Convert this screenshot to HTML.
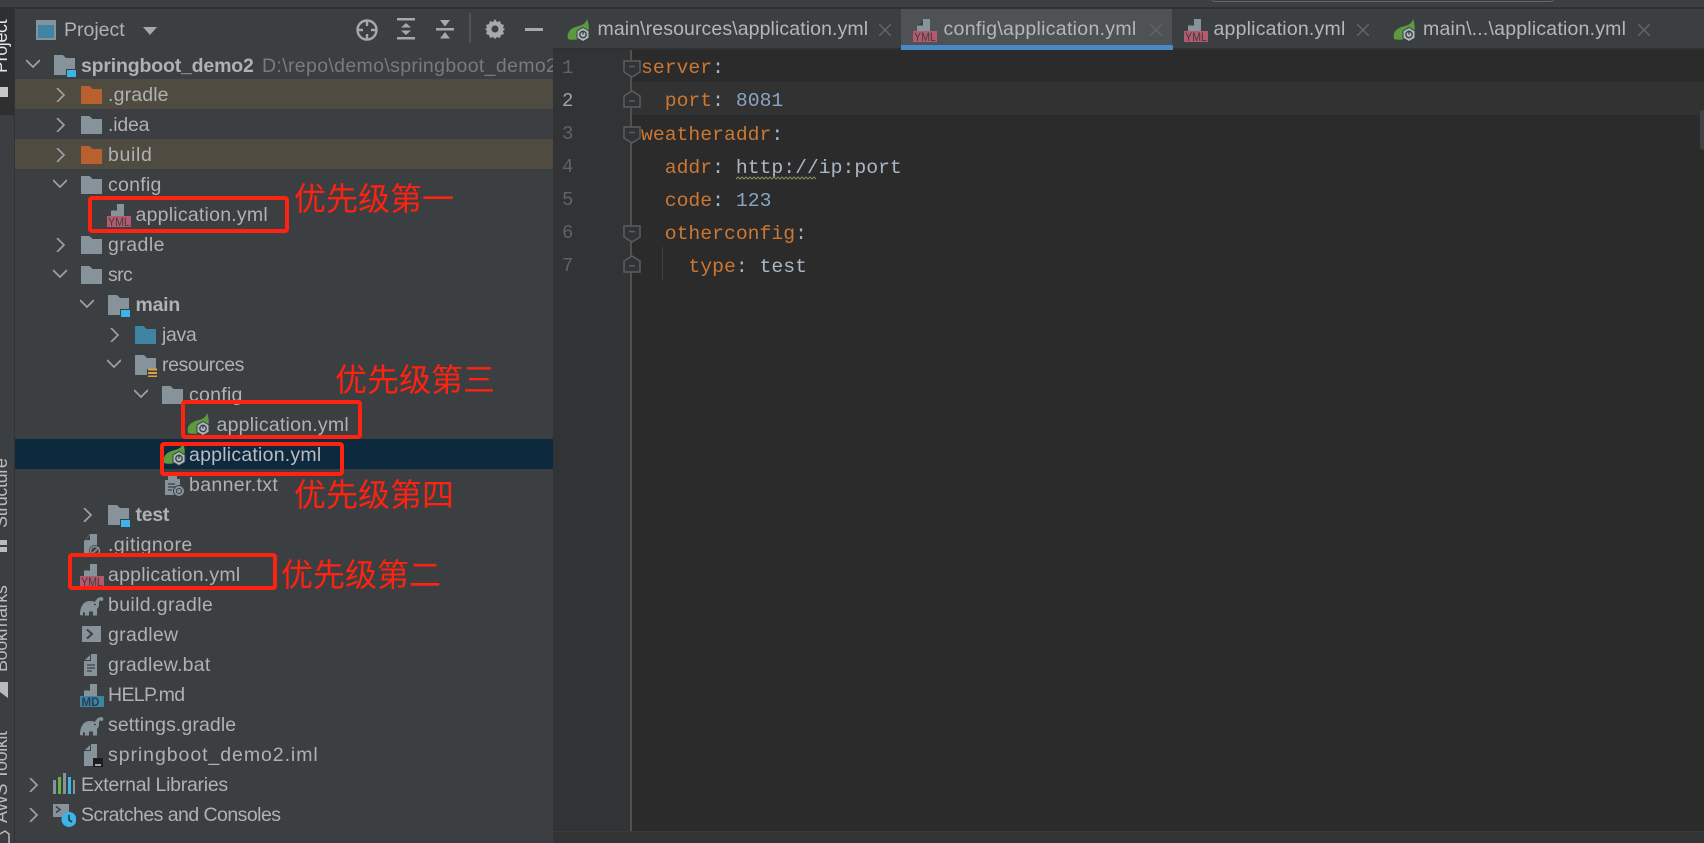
<!DOCTYPE html>
<html><head><meta charset="utf-8"><style>
html,body{margin:0;padding:0;background:#3c3f41;width:1704px;height:843px;overflow:hidden}
#p{position:relative;width:1704px;height:843px;overflow:hidden;font-family:"Liberation Sans","Noto Sans CJK SC",sans-serif}
.a{position:absolute}
.r{position:absolute;white-space:pre;height:30px;line-height:30px;margin-top:1px;font-size:19.5px;letter-spacing:.45px;color:#afb1b3}
.band{position:absolute;left:15px;width:538px;height:30px}
.i{position:absolute;width:24px;height:24px;overflow:visible}
.c{position:absolute;width:14px;height:14px;fill:none;stroke:#9da0a2;stroke-width:1.7}
.box{position:absolute;box-sizing:border-box;border:4px solid #fe2310;border-radius:4px}
.red{position:absolute;color:#fe2310;font-size:32px;line-height:32px;white-space:pre;font-family:"Noto Sans CJK SC",sans-serif;font-weight:400}
.tab{position:absolute;top:10px;line-height:39px;height:39px;font-size:19.5px;letter-spacing:.2px;color:#b4b7b9;white-space:pre}
.x{position:absolute;top:24px;width:12px;height:12px;stroke:#5f6365;stroke-width:1.6;fill:none}
.l{position:absolute;left:641px;white-space:pre;font-family:"Liberation Mono",monospace;font-size:19.75px;line-height:33px;height:33px;color:#a9b7c6}
.k{color:#cc7832}.n{color:#8aa5c0}
.ln{position:absolute;left:562px;font-family:"Liberation Mono",monospace;font-size:19px;line-height:33px;color:#606366}
.f{position:absolute;left:623px;width:18px;height:18px;fill:#313335;stroke:#5a5c5e;stroke-width:1.5}
.v{position:absolute;left:0;transform-origin:0 0;transform:rotate(-90deg);white-space:pre;font-size:18px;color:#bbbbbb;letter-spacing:-.4px;line-height:20px}
</style></head><body><div id="p">
<svg width="0" height="0" style="position:absolute"><defs>
<symbol id="folder" viewBox="0 0 24 24"><path d="M2 4h8.500l3 3H23v15H2z" fill="#87939a"/></symbol>
<symbol id="ofolder" viewBox="0 0 24 24"><path d="M2 4h8.500l3 3H23v15H2z" fill="#b8602e"/></symbol>
<symbol id="bfolder" viewBox="0 0 24 24"><path d="M2 4h8.500l3 3H23v15H2z" fill="#3f85a3"/></symbol>
<symbol id="mod" viewBox="0 0 24 24"><path d="M2 2h9l3 3h9v11h-9v6H2z" fill="#87939a"/><rect x="15" y="17" width="9" height="9" fill="#3cb4e7"/></symbol>
<symbol id="res" viewBox="0 0 24 24"><path d="M2 2h9l3 3h9v11h-9v6H2z" fill="#87939a"/><path d="M15 15.500h9v2h-9zM15 19h9v2h-9zM15 22.500h9v2h-9z" fill="#d9a343"/></symbol>
<symbol id="yml" viewBox="0 0 24 24"><path d="M10 1h7v12h-7zM4 13V8l7-7v12z" fill="#87939a"/><path d="M4.500 7.500l5.500-5.500v5.500z" fill="#3c3f41"/><rect x="0" y="13" width="24" height="11" fill="#b5596f"/><text x="1" y="23" textLength="22" lengthAdjust="spacingAndGlyphs" font-family="Liberation Sans" font-size="12" fill="#3c3f41">YML</text></symbol>
<symbol id="md" viewBox="0 0 24 24"><path d="M10 1h7v12h-7zM4 13V8l7-7v12z" fill="#87939a"/><path d="M4.500 7.500l5.500-5.500v5.500z" fill="#3c3f41"/><rect x="0" y="13" width="24" height="11" fill="#3a85a8"/><text x="1.500" y="23" font-family="Liberation Sans" font-weight="bold" font-size="11.500" fill="#2b3f4a">MD</text></symbol>
<symbol id="spring" viewBox="0 0 24 24"><path d="M1 20C-1 11 7 8 12 7c4-1 7-3 8-7 3 8 2 14-2 17-5 3-11 5-17 3z" fill="#5b9a3e"/><path d="M16 8.500l6 3.500v7l-6 3.500-6-3.500v-7z" fill="#aeb9c0" stroke="#3c3f41" stroke-width="1"/><circle cx="16" cy="15.500" r="3.200" fill="none" stroke="#3c3f41" stroke-width="1.400"/><path d="M16 11.500v4" stroke="#3c3f41" stroke-width="1.400"/></symbol>
<symbol id="txt" viewBox="0 0 24 24"><path d="M6 1h9v5h3v8H6z" fill="#87939a"/><path d="M3 7h13v15H3z" fill="#87939a"/><path d="M6 11h7M6 14h7M6 17h4" stroke="#3c3f41" stroke-width="1.300"/><circle cx="17" cy="18" r="5.500" fill="#87939a" stroke="#3c3f41"/><circle cx="17" cy="18" r="2.500" fill="none" stroke="#3c3f41"/></symbol>
<symbol id="git" viewBox="0 0 24 24"><path d="M10 1h7v13h-1v8H4V8z" fill="#87939a"/><path d="M5 7l5-5v5z" fill="#3c3f41"/><circle cx="15" cy="18" r="6" fill="#3c3f41"/><circle cx="15" cy="18" r="4.500" fill="none" stroke="#87939a" stroke-width="1.500"/><path d="M12 21l6-6" stroke="#87939a" stroke-width="1.500"/></symbol>
<symbol id="doc" viewBox="0 0 24 24"><path d="M11 1h6v22H4V8h7z" fill="#87939a"/><path d="M5 7l5-5v5z" fill="#87939a"/><path d="M7 12h8M7 15h8M7 18h5" stroke="#3c3f41" stroke-width="1.300"/></symbol>
<symbol id="iml" viewBox="0 0 24 24"><path d="M11 1h6v22H4V8h7z" fill="#87939a"/><path d="M5 7l5-5v5z" fill="#87939a"/><rect x="13" y="15" width="10" height="9" fill="#1b1c1d"/><path d="M15 22h6" stroke="#ddd" stroke-width="1.400"/></symbol>
<symbol id="term" viewBox="0 0 24 24"><rect x="2" y="3" width="19" height="16" fill="#87939a"/><path d="M7 6.500l5 4.500-5 4.500" fill="none" stroke="#3c3f41" stroke-width="2"/></symbol>
<symbol id="gradle" viewBox="0 0 24 24"><path d="M0 22C0 13 4 8 10 8c2 0 4 .5 5 1 1-3 4-5 6-5 2 0 3 2 2 3.500-1 1-2 0-3 0-1 .5-1 2-1 4 0 2-1 4-2 4v7h-4v-4H9v4H5v-3H3v3z" fill="#87939a"/><path d="M14 11.500l2 0" stroke="#3c3f41" stroke-width="1.200"/></symbol>
<symbol id="lib" viewBox="0 0 24 24"><path d="M1 8h3v14H1z" fill="#87939a"/><path d="M6 5h3v17H6z" fill="#62b543"/><path d="M11 1h3v21h-3z" fill="#87939a"/><path d="M16 5h3v17h-3z" fill="#3cb4e7"/><path d="M21 8h2v14h-2z" fill="#87939a"/></symbol>
<symbol id="scr" viewBox="0 0 24 24"><rect x="1" y="1" width="16" height="13" fill="#87939a"/><path d="M4 3.500l4 3-4 3" fill="none" stroke="#3c3f41" stroke-width="1.500"/><circle cx="17" cy="16.500" r="7.500" fill="#3cb4e7"/><path d="M17 12v5l3 2" fill="none" stroke="#222" stroke-width="1.400"/></symbol>
<symbol id="cr" viewBox="0 0 14 14"><path d="M3 0l7 7-7 7"/></symbol>
<symbol id="cd" viewBox="0 0 14 14"><path d="M0 3l7 7 7-7"/></symbol>
<symbol id="fd" viewBox="0 0 18 18"><path d="M1 1h16v11l-8 5-8-5z"/><path d="M6 6.500h6" fill="none"/></symbol>
<symbol id="fu" viewBox="0 0 18 18"><path d="M1 17h16V6L9 1 1 6z"/><path d="M6 11h6" fill="none"/></symbol>
</defs></svg>

<!-- top strip -->
<div class="a" style="left:1212px;top:-6px;width:342px;height:8px;border:1px solid #646669;border-radius:3px;box-sizing:border-box"></div>
<div class="a" style="left:0;top:7px;width:1704px;height:2px;background:#2f3132"></div>

<!-- left tool strip -->
<div class="a" style="left:0;top:9px;width:14px;height:106px;background:#2d2f30"></div>
<div class="a" style="left:14px;top:9px;width:1px;height:834px;background:#323232"></div>
<div class="a" style="left:0;top:0;width:14px;height:843px;overflow:hidden">
<div class="v" style="top:73px;left:-9px;color:#e6e6e6">Project</div>
<div class="a" style="left:0;top:87px;width:8px;height:10px;background:#c8c8c8"></div>
<div class="v" style="top:528px;left:-9px">Structure</div>
<div class="a" style="left:0;top:540px;width:7px;height:5px;background:#bbb"></div>
<div class="a" style="left:0;top:547px;width:7px;height:5px;background:#bbb"></div>
<div class="v" style="top:672px;left:-9px">Bookmarks</div>
<svg class="a" style="left:0;top:682px" width="8" height="16"><path d="M0 0h8v16L0 10z" fill="#bbb"/></svg>
<div class="v" style="top:823px;left:-9px">AWS Toolkit</div>
<svg class="a" style="left:0;top:830px" width="10" height="13"><path d="M0 4l5-3 4 3v9" fill="none" stroke="#bbb" stroke-width="1.500"/></svg>
</div>

<!-- project header -->
<svg class="a" style="left:36px;top:20px" width="20" height="20"><rect width="20" height="20" fill="#87939a"/><rect x="2" y="5" width="16" height="13" fill="#3f85a3"/></svg>
<div class="r" style="left:64px;top:14px;letter-spacing:0">Project</div>
<svg class="a" style="left:143px;top:27px" width="14" height="8"><path d="M0 0h14L7 8z" fill="#a6a8aa"/></svg>
<svg class="a" style="left:355px;top:18px" width="24" height="24" fill="none" stroke="#a6a8aa" stroke-width="2.400"><circle cx="12" cy="12" r="9.500"/><path d="M12 2v6M12 16v6M2 12h6M16 12h6"/></svg>
<svg class="a" style="left:397px;top:18px" width="18" height="22" fill="#a6a8aa"><rect y="0" width="18" height="2.500"/><rect y="19" width="18" height="2.500"/><path d="M9 5l5 4.500H4zM9 17l5-4.500H4z"/></svg>
<svg class="a" style="left:436px;top:19px" width="18" height="20" fill="#a6a8aa"><rect y="9" width="18" height="2.500"/><path d="M9 7.500L4 1h10zM9 13l5 6.500H4z"/></svg>
<div class="a" style="left:469px;top:13px;width:2px;height:30px;background:#515355"></div>
<svg class="a" style="left:485px;top:19px" width="20" height="20"><path d="M10 0l2 3 3-1 1 3 3 1-1 3 2 1-2 2 1 3-3 1-1 3-3-1-2 2-2-2-3 1-1-3-3-1 1-3-2-2 2-1-1-3 3-1 1-3 3 1z" fill="#a6a8aa"/><circle cx="10" cy="10" r="3.500" fill="#3c3f41"/></svg>
<div class="a" style="left:525px;top:28px;width:18px;height:3px;background:#a6a8aa"></div>

<!-- bands -->
<div class="band" style="top:79px;background:#4f4b41"></div>
<div class="band" style="top:139px;background:#4f4b41"></div>
<div class="band" style="top:439px;background:#0d293e"></div>

<!-- tree -->
<svg class="c" style="left:26px;top:57px"><use href="#cd"/></svg>
<svg class="i" style="left:52px;top:53px"><use href="#mod"/></svg>
<div class="r" style="left:81px;top:50px;font-weight:bold;letter-spacing:-.18px">springboot_demo2</div>
<div class="r" style="left:262px;top:50px;color:#787b7d;width:291px;overflow:hidden;letter-spacing:.35px">D:\repo\demo\springboot_demo2</div>

<svg class="c" style="left:54px;top:88px"><use href="#cr"/></svg><svg class="i" style="left:79px;top:82px"><use href="#ofolder"/></svg><div class="r" style="left:108px;top:79px;letter-spacing:.15px">.gradle</div>
<svg class="c" style="left:54px;top:118px"><use href="#cr"/></svg><svg class="i" style="left:79px;top:112px"><use href="#folder"/></svg><div class="r" style="left:108px;top:109px;letter-spacing:-.2px">.idea</div>
<svg class="c" style="left:54px;top:148px"><use href="#cr"/></svg><svg class="i" style="left:79px;top:142px"><use href="#ofolder"/></svg><div class="r" style="left:108px;top:139px;letter-spacing:.65px">build</div>
<svg class="c" style="left:53px;top:177px"><use href="#cd"/></svg><svg class="i" style="left:79px;top:172px"><use href="#folder"/></svg><div class="r" style="left:108px;top:169px;letter-spacing:.27px">config</div>
<svg class="i" style="left:107px;top:203px"><use href="#yml"/></svg><div class="r" style="left:135.500px;top:199px;letter-spacing:.23px">application.yml</div>
<svg class="c" style="left:54px;top:238px"><use href="#cr"/></svg><svg class="i" style="left:79px;top:232px"><use href="#folder"/></svg><div class="r" style="left:108px;top:229px">gradle</div>
<svg class="c" style="left:53px;top:267px"><use href="#cd"/></svg><svg class="i" style="left:79px;top:262px"><use href="#folder"/></svg><div class="r" style="left:108px;top:259px;letter-spacing:-.6px">src</div>
<svg class="c" style="left:80px;top:297px"><use href="#cd"/></svg><svg class="i" style="left:106px;top:293px"><use href="#mod"/></svg><div class="r" style="left:135.500px;top:289px;font-weight:bold;letter-spacing:-.25px">main</div>
<svg class="c" style="left:108px;top:328px"><use href="#cr"/></svg><svg class="i" style="left:133px;top:322px"><use href="#bfolder"/></svg><div class="r" style="left:162px;top:319px;letter-spacing:-.35px">java</div>
<svg class="c" style="left:107px;top:357px"><use href="#cd"/></svg><svg class="i" style="left:133px;top:353px"><use href="#res"/></svg><div class="r" style="left:162px;top:349px;letter-spacing:-.4px">resources</div>
<svg class="c" style="left:134px;top:387px"><use href="#cd"/></svg><svg class="i" style="left:160px;top:382px"><use href="#folder"/></svg><div class="r" style="left:189px;top:379px;letter-spacing:.27px">config</div>
<svg class="i" style="left:187px;top:413px"><use href="#spring"/></svg><div class="r" style="left:216.500px;top:409px;letter-spacing:.23px">application.yml</div>
<svg class="i" style="left:163px;top:443px"><use href="#spring"/></svg><div class="r" style="left:189px;top:439px;color:#b9bdc0;letter-spacing:.23px">application.yml</div>
<svg class="i" style="left:162px;top:473px"><use href="#txt"/></svg><div class="r" style="left:189px;top:469px;letter-spacing:.35px">banner.txt</div>
<svg class="c" style="left:81px;top:508px"><use href="#cr"/></svg><svg class="i" style="left:106px;top:503px"><use href="#mod"/></svg><div class="r" style="left:135.500px;top:499px;font-weight:bold;letter-spacing:-.25px">test</div>
<svg class="i" style="left:80px;top:533px"><use href="#git"/></svg><div class="r" style="left:108px;top:529px">.gitignore</div>
<svg class="i" style="left:80px;top:563px"><use href="#yml"/></svg><div class="r" style="left:108px;top:559px;letter-spacing:.23px">application.yml</div>
<svg class="i" style="left:80px;top:593px"><use href="#gradle"/></svg><div class="r" style="left:108px;top:589px;letter-spacing:.36px">build.gradle</div>
<svg class="i" style="left:80px;top:623px"><use href="#term"/></svg><div class="r" style="left:108px;top:619px;letter-spacing:.3px">gradlew</div>
<svg class="i" style="left:80px;top:653px"><use href="#doc"/></svg><div class="r" style="left:108px;top:649px;letter-spacing:.25px">gradlew.bat</div>
<svg class="i" style="left:80px;top:683px"><use href="#md"/></svg><div class="r" style="left:108px;top:679px;letter-spacing:-.64px">HELP.md</div>
<svg class="i" style="left:80px;top:713px"><use href="#gradle"/></svg><div class="r" style="left:108px;top:709px;letter-spacing:.09px">settings.gradle</div>
<svg class="i" style="left:80px;top:743px"><use href="#iml"/></svg><div class="r" style="left:108px;top:739px;letter-spacing:.94px">springboot_demo2.iml</div>
<svg class="c" style="left:27px;top:778px"><use href="#cr"/></svg><svg class="i" style="left:52px;top:772px"><use href="#lib"/></svg><div class="r" style="left:81px;top:769px;letter-spacing:-.27px">External Libraries</div>
<svg class="c" style="left:27px;top:808px"><use href="#cr"/></svg><svg class="i" style="left:52px;top:803px"><use href="#scr"/></svg><div class="r" style="left:81px;top:799px;letter-spacing:-.54px">Scratches and Consoles</div>

<!-- editor -->
<div class="a" style="left:553px;top:0;width:1151px;height:9px;background:#3c3f41"></div>
<div class="a" style="left:553px;top:7px;width:1151px;height:2px;background:#2f3132"></div>
<div class="a" style="left:1212px;top:-6px;width:342px;height:8px;border:1px solid #646669;border-radius:3px;box-sizing:border-box"></div>
<div class="a" style="left:553px;top:9px;width:1151px;height:39px;background:#3c3f41"></div>
<div class="a" style="left:553px;top:48px;width:78px;height:795px;background:#313335"></div>
<div class="a" style="left:631px;top:48px;width:1073px;height:795px;background:#2b2b2b"></div>
<div class="a" style="left:553px;top:48px;width:1151px;height:2px;background:#2f3132"></div>
<div class="a" style="left:632px;top:82px;width:1072px;height:33px;background:#323232"></div>
<div class="a" style="left:630px;top:50px;width:2px;height:781px;background:#505050"></div>
<div class="a" style="left:662px;top:247px;width:1px;height:33px;background:#3f4143"></div>
<div class="a" style="left:553px;top:831px;width:1151px;height:12px;background:#313335;border-top:1px solid #3a3b3c;box-sizing:border-box"></div>
<div class="a" style="left:1700px;top:110px;width:4px;height:40px;background:#3f4244;border-radius:3px 0 0 3px"></div>

<!-- tabs -->
<div class="a" style="left:901px;top:9px;width:271px;height:36px;background:#4e5254"></div>
<div class="a" style="left:901px;top:45px;width:272px;height:5px;background:#4a88c7"></div>
<svg class="i" style="left:567px;top:19px"><use href="#spring"/></svg>
<div class="tab" style="left:597.500px;letter-spacing:.1px">main\resources\application.yml</div>
<svg class="x" style="left:879px"><path d="M0 0l12 12M12 0L0 12"/></svg>
<svg class="i" style="left:913px;top:18px"><use href="#yml"/></svg>
<div class="tab" style="left:943.500px;letter-spacing:.3px">config\application.yml</div>
<svg class="x" style="left:1150px"><path d="M0 0l12 12M12 0L0 12"/></svg>
<svg class="i" style="left:1184px;top:18px"><use href="#yml"/></svg>
<div class="tab" style="left:1213.500px">application.yml</div>
<svg class="x" style="left:1357px"><path d="M0 0l12 12M12 0L0 12"/></svg>
<svg class="i" style="left:1393px;top:19px"><use href="#spring"/></svg>
<div class="tab" style="left:1423px">main\...\application.yml</div>
<svg class="x" style="left:1638px"><path d="M0 0l12 12M12 0L0 12"/></svg>

<!-- gutter -->
<div class="ln" style="top:52px">1</div>
<div class="ln" style="top:85px;color:#a4a3a3">2</div>
<div class="ln" style="top:118px">3</div>
<div class="ln" style="top:151px">4</div>
<div class="ln" style="top:184px">5</div>
<div class="ln" style="top:217px">6</div>
<div class="ln" style="top:250px">7</div>
<svg class="f" style="top:60px"><use href="#fd"/></svg>
<svg class="f" style="top:90px"><use href="#fu"/></svg>
<svg class="f" style="top:126px"><use href="#fd"/></svg>
<svg class="f" style="top:225px"><use href="#fd"/></svg>
<svg class="f" style="top:255px"><use href="#fu"/></svg>

<!-- code -->
<div class="l" style="top:52px"><span class="k">server</span>:</div>
<div class="l" style="top:85px">  <span class="k">port</span>: <span class="n">8081</span></div>
<div class="l" style="top:119px"><span class="k">weatheraddr</span>:</div>
<div class="l" style="top:152px">  <span class="k">addr</span>: http://ip:port</div>
<div class="l" style="top:185px">  <span class="k">code</span>: <span class="n">123</span></div>
<div class="l" style="top:218px">  <span class="k">otherconfig</span>:</div>
<div class="l" style="top:251px">    <span class="k">type</span>: test</div>
<svg class="a" style="left:736px;top:176px" width="85" height="4"><path d="M0 3l2-2 2 2 2-2 2 2 2-2 2 2 2-2 2 2 2-2 2 2 2-2 2 2 2-2 2 2 2-2 2 2 2-2 2 2 2-2 2 2 2-2 2 2 2-2 2 2 2-2 2 2 2-2 2 2 2-2 2 2 2-2 2 2 2-2 2 2 2-2 2 2 2-2 2 2 2-2 2 2" fill="none" stroke="#8b8a5c" stroke-width="1"/></svg>

<!-- annotations -->
<div class="box" style="left:88px;top:196px;width:201px;height:37px"></div>
<div class="box" style="left:181px;top:400px;width:181px;height:39px"></div>
<div class="box" style="left:160px;top:442px;width:184px;height:34px"></div>
<div class="box" style="left:68px;top:553px;width:209px;height:37px"></div>
<div class="red" style="left:294px;top:181px">优先级第一</div>
<div class="red" style="left:335px;top:362px">优先级第三</div>
<div class="red" style="left:294px;top:477px">优先级第四</div>
<div class="red" style="left:281px;top:557px">优先级第二</div>
</div></body></html>
